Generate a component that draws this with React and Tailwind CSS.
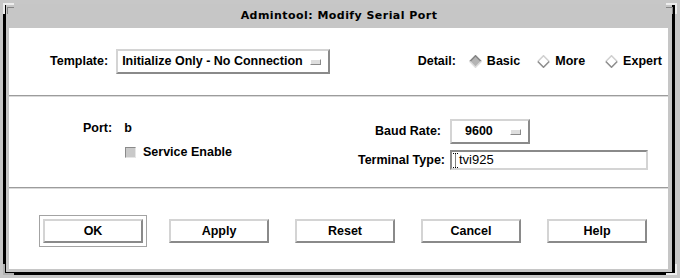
import React from "react";

const raised =
  "border-2 border-t-[#d4d4d4] border-l-[#d4d4d4] border-b-[#8a8a8a] border-r-[#8a8a8a] bg-white";

function Diamond({ selected }) {
  return (
    <svg width="13" height="13" viewBox="0 0 13 13" className="shrink-0">
      <polygon
        points="6.5,0.8 12.2,6.5 6.5,12.2 0.8,6.5"
        fill={selected ? "#b4b4b4" : "#ffffff"}
      />
      <polyline
        points="0.8,6.5 6.5,0.8 12.2,6.5"
        fill="none"
        stroke={selected ? "#858585" : "#d0d0d0"}
        strokeWidth="1.6"
      />
      <polyline
        points="0.8,6.5 6.5,12.2 12.2,6.5"
        fill="none"
        stroke={selected ? "#dcdcdc" : "#8e8e8e"}
        strokeWidth="1.6"
      />
    </svg>
  );
}

function MenuMark() {
  return (
    <span className="inline-block w-[11px] h-[6px] bg-[#dedede] border border-t-white border-l-white border-b-[#8a8a8a] border-r-[#8a8a8a] shrink-0" />
  );
}

function PushButton({ children }) {
  return (
    <button
      type="button"
      className={`w-[100px] h-[24px] ${raised} flex items-center justify-center font-bold text-[12.5px] text-black`}
    >
      {children}
    </button>
  );
}

function Separator() {
  return <div className="h-[2px] border-t border-t-[#9c9c9c] border-b border-b-[#dadada]" />;
}

export default function App() {
  return (
    <div className="relative w-[680px] h-[278px] overflow-hidden bg-[#c7c7c7] pt-[4px] pl-[3px] font-['Liberation_Sans',Arial,sans-serif] text-black">
      {/* resize corner marks */}
      <span className="absolute left-[3px] top-[3px] w-[11px] h-[11px] border-t-2 border-l-2 border-[#ededed]" />
      <span className="absolute left-[7px] top-[7px] w-[7px] h-[7px] border-t border-l border-[#858585]" />
      <span className="absolute right-[3px] top-[3px] w-[11px] h-[11px] border-t-2 border-r-2 border-[#ededed]" />
      <span className="absolute right-[7px] top-[7px] w-[7px] h-[7px] border-t border-r border-[#858585]" />
      <span className="absolute left-[3px] bottom-[3px] w-[11px] h-[11px] border-b-2 border-l-2 border-[#b0b0b0]" />
      <span className="absolute right-[3px] bottom-[3px] w-[11px] h-[11px] border-b-2 border-r-2 border-[#ededed]" />

      <div className="w-[672px] h-[271px] border-l-[3px] border-r-[3px] border-b-[3px] border-black bg-[#c6c6c6] flex flex-col">
        {/* title bar */}
        <div className="h-[24px] flex items-center justify-center font-['DejaVu_Sans',sans-serif] font-bold text-[11px] tracking-[0.45px]">
          Admintool: Modify Serial Port
        </div>

        {/* client area */}
        <div className="flex-1 ml-[3px] mr-[4px] mb-[3px] bg-white flex flex-col text-[12.5px] font-bold">
          {/* template / detail row */}
          <div className="h-[67px] flex items-center pl-[41px] pr-[6px]">
            <span>Template:</span>
            <div className={`ml-[8px] w-[214px] h-[25px] ${raised} flex items-center pl-[4px] gap-[7px]`}>
              <span>Initialize Only - No Connection</span>
              <MenuMark />
            </div>
            <div className="ml-auto flex items-center">
              <span>Detail:</span>
              <span className="ml-[13px]"><Diamond selected /></span>
              <span className="ml-[5px]">Basic</span>
              <span className="ml-[17px]"><Diamond /></span>
              <span className="ml-[5px]">More</span>
              <span className="ml-[20px]"><Diamond /></span>
              <span className="ml-[5px]">Expert</span>
            </div>
          </div>

          <Separator />

          {/* port settings */}
          <div className="h-[90px] flex">
            <div className="w-[343px] pl-[74px] pt-[23px] flex flex-col">
              <div className="h-[16px] flex items-center gap-[12px]">
                <span>Port:</span>
                <span>b</span>
              </div>
              <div className="mt-[8px] h-[16px] flex items-center pl-[42px]">
                <span className="w-[11px] h-[11px] bg-[#c9c9c9] border border-t-[#8a8a8a] border-l-[#8a8a8a] border-b-[#e6e6e6] border-r-[#e6e6e6]" />
                <span className="ml-[7px]">Service Enable</span>
              </div>
            </div>
            <div className="pt-[22px] flex flex-col">
              <div className="flex items-center h-[25px]">
                <span className="w-[93px] text-right pr-[4px]">Baud Rate:</span>
                <div className={`ml-[5px] w-[80px] h-[25px] ${raised} flex items-center pl-[13px] gap-[17px]`}>
                  <span>9600</span>
                  <MenuMark />
                </div>
              </div>
              <div className="flex items-center h-[20px] mt-[6px]">
                <span className="w-[93px] text-right">Terminal Type:</span>
                <div className="ml-[5px] w-[198px] h-[20px] border-2 border-t-[#8a8a8a] border-l-[#8a8a8a] border-b-[#d4d4d4] border-r-[#d4d4d4] bg-white flex items-center pl-[1px]">
                  <svg width="5" height="15" viewBox="0 0 5 15" className="shrink-0">
                    <path d="M0 0.5h5M2.5 0.5v14M0 14.5h5" stroke="#000" strokeWidth="1" strokeDasharray="1 1" fill="none" />
                  </svg>
                  <span className="ml-[1px] font-normal text-[13px]">tvi925</span>
                </div>
              </div>
            </div>
          </div>

          <Separator />

          {/* action buttons */}
          <div className="flex-1 pt-[26px] pl-[30px] flex items-start">
            <div className="border border-[#a3a3a3] p-[3px]">
              <PushButton>OK</PushButton>
            </div>
            <div className="ml-[22px] mt-[4px]"><PushButton>Apply</PushButton></div>
            <div className="ml-[26px] mt-[4px]"><PushButton>Reset</PushButton></div>
            <div className="ml-[26px] mt-[4px]"><PushButton>Cancel</PushButton></div>
            <div className="ml-[26px] mt-[4px]"><PushButton>Help</PushButton></div>
          </div>
        </div>
      </div>
    </div>
  );
}
